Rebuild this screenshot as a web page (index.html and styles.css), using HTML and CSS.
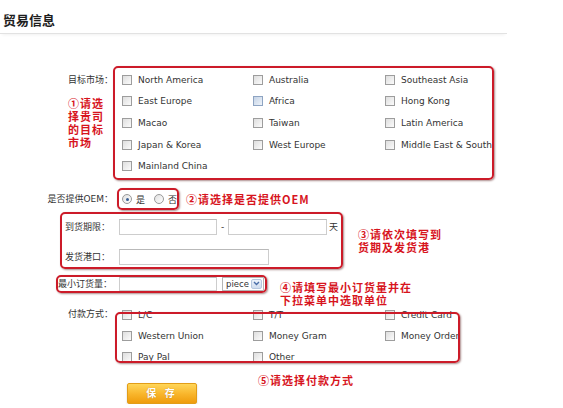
FILE: index.html
```html
<!DOCTYPE html>
<html lang="zh-CN">
<head>
<meta charset="UTF-8" />
<title>贸易信息</title>
<link rel="stylesheet" href="styles.css">
</head>
<body>

<h2 class="title">贸易信息</h2>

<div class="form">
  <!-- target markets -->
  <div class="row market">
    <div class="side">
      <div class="lab">目标市场：</div>
      <p class="note note-1">①请选<br>择贵司<br>的目标<br>市场</p>
    </div>
    <div class="mark opts">
      <label class="opt"><span class="cb"></span>North America</label>
      <label class="opt"><span class="cb"></span>Australia</label>
      <label class="opt"><span class="cb"></span>Southeast Asia</label>
      <label class="opt"><span class="cb"></span>East Europe</label>
      <label class="opt"><span class="cb hover"></span>Africa</label>
      <label class="opt"><span class="cb"></span>Hong Kong</label>
      <label class="opt"><span class="cb"></span>Macao</label>
      <label class="opt"><span class="cb"></span>Taiwan</label>
      <label class="opt"><span class="cb"></span>Latin America</label>
      <label class="opt"><span class="cb"></span>Japan &amp; Korea</label>
      <label class="opt"><span class="cb"></span>West Europe</label>
      <label class="opt"><span class="cb"></span>Middle East &amp; South</label>
      <label class="opt"><span class="cb"></span>Mainland China</label>
    </div>
  </div>

  <!-- OEM -->
  <div class="row oem">
    <div class="lab">是否提供OEM：</div>
    <div class="mark radios">
      <span class="rb on"></span><span class="rb-text">是</span>
      <span class="rb"></span><span class="rb-text">否</span>
    </div>
    <p class="note note-2">②请选择是否提供OEM</p>
  </div>

  <!-- delivery -->
  <div class="row delivery">
    <div class="mark fields">
      <div class="field">
        <span class="lab2">到货期限：</span>
        <input type="text" class="inp">
        <span class="dash">-</span>
        <input type="text" class="inp inp-b">
        <span class="unit">天</span>
      </div>
      <div class="field">
        <span class="lab2">发货港口：</span>
        <input type="text" class="inp inp-wide">
      </div>
    </div>
    <p class="note note-3">③请依次填写到<br>货期及发货港</p>
  </div>

  <!-- minimum order -->
  <div class="row moq">
    <div class="mark moq-box">
      <span class="lab3">最小订货量：</span>
      <input type="text" class="inp inp-moq">
      <span class="select">piece<span class="arrow"><svg width="7" height="5" viewBox="0 0 7 5"><path d="M1 1 L3.5 3.5 L6 1" fill="none" stroke="#4a6ea8" stroke-width="1.4"/></svg></span></span>
    </div>
    <p class="note note-4">④请填写最小订货量并在<br>下拉菜单中选取单位</p>
  </div>

  <!-- payment -->
  <div class="row pay">
    <div class="lab">付款方式：</div>
    <div class="opts pay-opts">
      <label class="opt"><span class="cb"></span>L/C</label>
      <label class="opt"><span class="cb"></span>T/T</label>
      <label class="opt"><span class="cb"></span>Credit Card</label>
      <label class="opt"><span class="cb"></span>Western Union</label>
      <label class="opt"><span class="cb"></span>Money Gram</label>
      <label class="opt"><span class="cb"></span>Money Order</label>
      <label class="opt"><span class="cb"></span>Pay Pal</label>
      <label class="opt"><span class="cb"></span>Other</label>
      <span class="mark frame"></span>
    </div>
  </div>

  <div class="row actions">
    <button class="save">保 存</button>
    <p class="note note-5">⑤请选择付款方式</p>
  </div>
</div>

</body>
</html>
```

FILE: styles.css
```css
body {
  margin: 0;
  font-family: "DejaVu Sans", "Noto Sans CJK SC", sans-serif;
  font-size: 9px;
  color: #333;
  background: #fff;
}
.title {
  margin: 0;
  width: 507px;
  height: 34px;
  box-sizing: border-box;
  padding: 12px 0 0 3px;
  font: bold 13px/16px "Noto Sans CJK SC", sans-serif;
  color: #1e1e1e;
  border-bottom: 1px solid #e2e2e2;
  box-shadow: 0 3px 3px -2px rgba(0,0,0,0.06);
}

.form {
  margin-top: 32px;
}
.row {
  display: flex;
}
.lab {
  width: 113px;
  flex: none;
  text-align: right;
  line-height: 14px;
  color: #333;
}

/* red callout frames */
.mark {
  border: 2px solid #cc1b29;
  border-radius: 5px;
  box-shadow: 1px 1px 2px rgba(70,0,0,0.45);
  box-sizing: border-box;
}
.note {
  margin: 0;
  font: bold 11px/13px "Noto Sans CJK SC", sans-serif;
  letter-spacing: 1px;
  color: #d7141d;
  white-space: nowrap;
}

/* checkbox grids */
.opts {
  display: grid;
  grid-template-columns: 131px 132px 1fr;
  grid-auto-rows: 21.6px;
  padding: 1px 0 1px 7px;
  width: 381px;
}
.opt {
  display: flex;
  align-items: center;
  gap: 6px;
  color: #333;
  white-space: nowrap;
}
.cb {
  width: 10px;
  height: 10px;
  box-sizing: border-box;
  border: 1px solid #9d9d9d;
  background: linear-gradient(135deg, #dedede, #fbfbfb);
  flex: none;
}
.cb.hover {
  border-color: #8ea4c2;
  background: linear-gradient(135deg, #c5d3e6, #eef3f9);
}

.market .side {
  width: 113px;
  flex: none;
}
.market .lab {
  padding-top: 7px;
}
.note-1 {
  margin: 9.5px 0 0 68px;
}

/* OEM radios */
.oem {
  margin-top: 8px;
  align-items: center;
}
.radios {
  display: flex;
  align-items: center;
  margin-left: 4px;
  width: 62px;
  height: 22.5px;
  padding-left: 3px;
}
.rb {
  width: 10px;
  height: 10px;
  box-sizing: border-box;
  border: 1px solid #9a9a9a;
  border-radius: 50%;
  background: linear-gradient(135deg, #e0e0e0, #fff);
  position: relative;
  flex: none;
}
.rb.on::after {
  content: "";
  position: absolute;
  left: 2.5px;
  top: 2.5px;
  width: 3px;
  height: 3px;
  border-radius: 50%;
  background: #3a5f94;
}
.rb-text {
  margin: 0 9px 0 4px;
  font-family: "Noto Sans CJK SC", sans-serif;
}
.note-2 {
  margin-left: 7px;
}

/* delivery fields */
.delivery {
  margin-top: 1.5px;
  align-items: flex-start;
}
.fields {
  margin-left: 60px;
  width: 283px;
  padding: 5px 0 2px 3px;
  display: flex;
  flex-direction: column;
  gap: 14px;
}
.field {
  display: flex;
  align-items: center;
  height: 16px;
}
.lab2 {
  width: 54px;
  flex: none;
}
.inp {
  width: 98px;
  height: 16px;
  box-sizing: border-box;
  border: 1px solid #cdcdcd;
  border-top-color: #b9b9b9;
  padding: 0;
  margin: 0;
  background: #fff;
}
.inp-b {
  width: 99px;
}
.inp-wide {
  width: 150px;
}
.dash {
  width: 11px;
  text-align: center;
}
.unit {
  margin-left: 2px;
  font-family: "Noto Sans CJK SC", sans-serif;
}
.note-3 {
  margin: 16.5px 0 0 15px;
}

/* minimum order */
.moq {
  margin-top: 6px;
  height: 29.5px;
  align-items: flex-start;
}
.moq-box {
  margin-left: 56px;
  width: 211px;
  height: 18px;
  display: flex;
  align-items: center;
}
.lab3 {
  width: 61px;
  flex: none;
}
.inp-moq {
  height: 14px;
}
.select {
  margin-left: 5px;
  width: 42px;
  height: 14px;
  box-sizing: border-box;
  border: 1px solid #b5b5b5;
  display: flex;
  align-items: center;
  justify-content: space-between;
  padding: 0 1px 0 3px;
  font-size: 8.5px;
  background: #fff;
}
.arrow {
  width: 11px;
  height: 10px;
  box-sizing: border-box;
  border: 1px solid #b6c7df;
  border-radius: 2px;
  background: linear-gradient(#eef3fb, #cfdcee);
  display: flex;
  align-items: center;
  justify-content: center;
}
.note-4 {
  margin: 6.5px 0 0 13px;
  line-height: 12.5px;
}

/* payment */
.pay .lab {
  line-height: 21px;
}
.pay-opts {
  position: relative;
  grid-auto-rows: 21px;
  padding: 0 0 0 9px;
  width: 400px;
}
.frame {
  position: absolute;
  left: 2px;
  top: 7.5px;
  width: 345px;
  bottom: 4.5px;
  pointer-events: none;
}

/* save button */
.actions {
  align-items: flex-start;
}
.save {
  margin: 15.5px 0 0 127px;
  width: 70px;
  height: 21px;
  border: 1px solid #e29d18;
  border-radius: 2px;
  background: linear-gradient(#ffd658, #f8b42a 55%, #ef9c0c);
  box-shadow: 0 1px 2px rgba(0,0,0,0.2);
  color: #fff;
  font: bold 10px/1 "Noto Sans CJK SC", sans-serif;
  letter-spacing: 3px;
  text-shadow: 0 0 1px rgba(150,80,0,0.6);
  padding: 0;
  cursor: pointer;
}
.note-5 {
  margin: 6.5px 0 0 61px;
}
```
